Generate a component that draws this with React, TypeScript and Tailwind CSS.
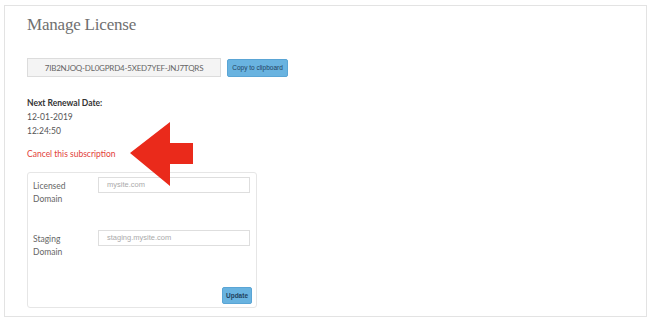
import React from "react";

export default function App() {
  return (
    <div className="relative w-[650px] h-[322px] bg-white pt-[5px] pl-[4px]" style={{ fontFamily: "Lato, 'Open Sans', sans-serif" }}>
      <div className="relative w-[643px] h-[312px] border border-[#e3e3e3] pl-[22px] pt-[8px] box-border">
        <h1 className="text-[17px] leading-[22px] text-[#707070] font-normal tracking-[-0.2px]" style={{ fontFamily: "'Liberation Serif', 'DejaVu Serif', serif" }}>
          Manage License
        </h1>
        <div className="flex items-center mt-[22px] gap-[6px]">
          <div className="w-[194px] h-[19px] bg-[#f4f4f4] border border-[#dcdcdc] flex items-center justify-center text-[8px] tracking-[-0.2px] text-[#666] whitespace-nowrap">
            7IB2NJOQ-DL0GPRD4-5XED7YEF-JNJ7TQRS
          </div>
          <div className="w-[61px] h-[18px] rounded-[2px] bg-[#69b3e0] border border-[#5aa5d5] flex items-center justify-center text-[6.5px] text-[#22425f] whitespace-nowrap" style={{ fontFamily: "'Liberation Sans', Arial, sans-serif" }}>
            Copy to clipboard
          </div>
        </div>
        <div className="mt-[19px] text-[8.5px] leading-[14px] text-[#555]">
          <div className="font-bold text-[#333]">Next Renewal Date:</div>
          <div>12-01-2019</div>
          <div>12:24:50</div>
        </div>
        <div className="mt-[9px] text-[8.5px] leading-[14px] text-[#e2403a]">Cancel this subscription</div>
        <div className="mt-[11px] w-[230px] h-[136px] border border-[#e6e6e6] rounded-[3px] relative box-border">
          <div className="flex pl-[5px] pt-[4px]">
            <div className="w-[65px] text-[8.5px] leading-[13px] text-[#666] pt-[3px]">Licensed<br />Domain</div>
            <div className="w-[152px] h-[16px] border border-[#dedede] flex items-center pl-[8px] text-[7.5px] text-[#aaa]" style={{ fontFamily: "'Liberation Sans', Arial, sans-serif" }}>mysite.com</div>
          </div>
          <div className="flex pl-[5px] mt-[24px]">
            <div className="w-[65px] text-[8.5px] leading-[13px] text-[#666] pt-[3px]">Staging<br />Domain</div>
            <div className="w-[152px] h-[16px] border border-[#dedede] flex items-center pl-[8px] text-[7.5px] text-[#aaa]" style={{ fontFamily: "'Liberation Sans', Arial, sans-serif" }}>staging.mysite.com</div>
          </div>
          <div className="absolute right-[4px] bottom-[3px] w-[30px] h-[17px] rounded-[2px] bg-[#69b3e0] border border-[#5aa5d5] flex items-center justify-center text-[6.5px] font-bold text-[#22425f]" style={{ fontFamily: "'Liberation Sans', Arial, sans-serif" }}>Update</div>
        </div>
      </div>
      <svg className="absolute left-0 top-0" width="650" height="322" viewBox="0 0 650 322">
        <polygon points="130,153 170,122 170,143 193,143 193,164 170,164 170,186" fill="#ea2a1b" />
      </svg>
    </div>
  );
}
